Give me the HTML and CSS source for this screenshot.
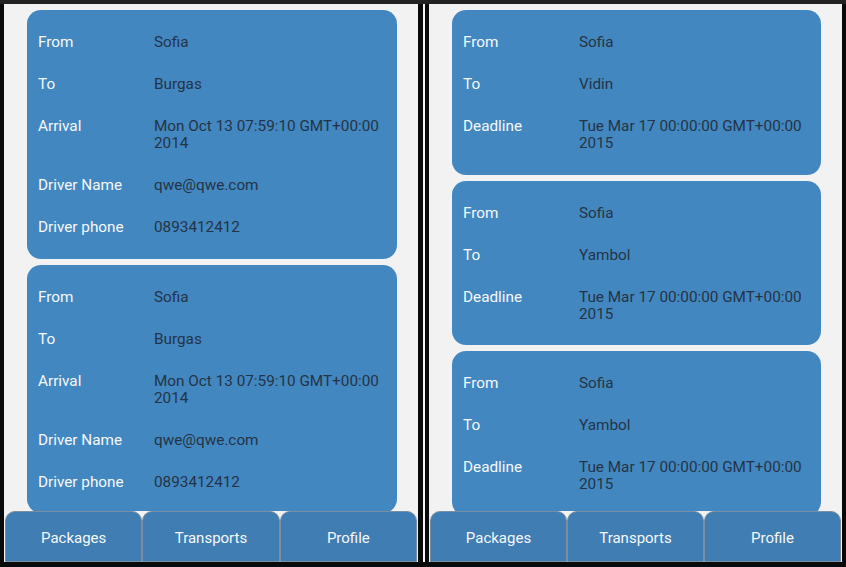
FILE: index.html
```html
<!DOCTYPE html>
<html>
<head>
<meta charset="utf-8">
<link rel="stylesheet" href="styles.css">
</head>
<body>
<div class="screen">
  <div class="phone phone-left">
    <div class="content">
      <div class="card">
        <div class="row"><span class="label">From</span><span class="value">Sofia</span></div>
        <div class="row"><span class="label">To</span><span class="value">Burgas</span></div>
        <div class="row"><span class="label">Arrival</span><span class="value">Mon Oct 13 07:59:10 GMT+00:00 2014</span></div>
        <div class="row"><span class="label">Driver Name</span><span class="value">qwe@qwe.com</span></div>
        <div class="row"><span class="label">Driver phone</span><span class="value">0893412412</span></div>
      </div>
      <div class="card">
        <div class="row"><span class="label">From</span><span class="value">Sofia</span></div>
        <div class="row"><span class="label">To</span><span class="value">Burgas</span></div>
        <div class="row"><span class="label">Arrival</span><span class="value">Mon Oct 13 07:59:10 GMT+00:00 2014</span></div>
        <div class="row"><span class="label">Driver Name</span><span class="value">qwe@qwe.com</span></div>
        <div class="row"><span class="label">Driver phone</span><span class="value">0893412412</span></div>
      </div>
    </div>
    <div class="tabs">
      <div class="tab">Packages</div>
      <div class="tab">Transports</div>
      <div class="tab">Profile</div>
    </div>
  </div>
  <div class="sep"><div class="sep-line"></div></div>
  <div class="phone phone-right">
    <div class="content">
      <div class="card">
        <div class="row"><span class="label">From</span><span class="value">Sofia</span></div>
        <div class="row"><span class="label">To</span><span class="value">Vidin</span></div>
        <div class="row"><span class="label">Deadline</span><span class="value">Tue Mar 17 00:00:00 GMT+00:00 2015</span></div>
      </div>
      <div class="card">
        <div class="row"><span class="label">From</span><span class="value">Sofia</span></div>
        <div class="row"><span class="label">To</span><span class="value">Yambol</span></div>
        <div class="row"><span class="label">Deadline</span><span class="value">Tue Mar 17 00:00:00 GMT+00:00 2015</span></div>
      </div>
      <div class="card">
        <div class="row"><span class="label">From</span><span class="value">Sofia</span></div>
        <div class="row"><span class="label">To</span><span class="value">Yambol</span></div>
        <div class="row"><span class="label">Deadline</span><span class="value">Tue Mar 17 00:00:00 GMT+00:00 2015</span></div>
      </div>
    </div>
    <div class="tabs">
      <div class="tab">Packages</div>
      <div class="tab">Transports</div>
      <div class="tab">Profile</div>
    </div>
  </div>
</div>
</body>
</html>
```

FILE: styles.css
```css
* { box-sizing: border-box; }

html, body {
  margin: 0;
  padding: 0;
  background: #0a0a0a;
}

body {
  width: 846px;
  height: 567px;
  overflow: hidden;
  font-family: Roboto, "Noto Sans", sans-serif;
}

.screen {
  display: flex;
  width: 846px;
  height: 567px;
  padding: 4px 4px 5px 4px;
  background: #0a0a0a;
  box-shadow: inset 0 4px 0 #222222;
}

.phone {
  display: flex;
  flex-direction: column;
  background: #f2f2f2;
  height: 558px;
}

.phone-left { width: 414px; }
.phone-right { width: 413px; }

.sep {
  width: 11px;
  display: flex;
  padding-left: 5px;
}

.sep-line {
  width: 2px;
  height: 100%;
  background: #f4f4f4;
}

.content {
  flex: 1;
  overflow: hidden;
  padding: 6px 21px 0 23px;
}

.card {
  background: #4387c0;
  border-radius: 14px;
  padding: 11.5px 10px 10px 11px;
  margin-bottom: 6px;
}

.row {
  display: grid;
  grid-template-columns: 116px 1fr;
  padding: 12.5px 0;
  font-size: 15.3px;
  line-height: 17px;
}

.label {
  color: #f6f8fa;
}

.value {
  color: #233447;
}

.tabs {
  display: flex;
  height: 51px;
  padding: 0 1px 0 1px;
  background: #f2f2f2;
}

.tab {
  flex: 1;
  display: flex;
  align-items: center;
  justify-content: center;
  background: #3f7db3;
  border: 1px solid #7a8ea1;
  border-radius: 10px 10px 0 0;
  color: #f6f8fa;
  font-size: 15px;
  padding-top: 2px;
}
```
